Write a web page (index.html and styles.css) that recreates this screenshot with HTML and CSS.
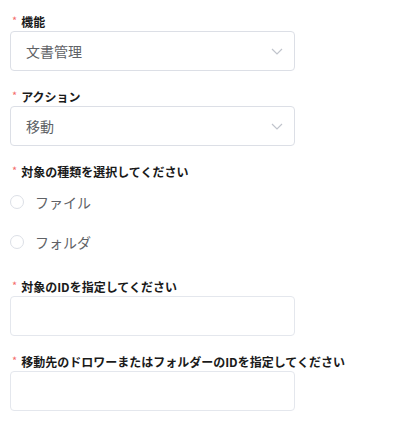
FILE: index.html
```html
<!DOCTYPE html>
<html lang="ja">
<head>
<meta charset="utf-8">
<link rel="stylesheet" href="styles.css">
</head>
<body>
<form class="form">
  <div class="item">
    <label class="label"><span class="req">*</span>機能</label>
    <div class="select">
      <span class="value">文書管理</span>
      <svg class="chev" width="12" height="7" viewBox="0 0 12 7"><path d="M1 1l5 5 5-5" fill="none" stroke="#c0c4cc" stroke-width="1.2"/></svg>
    </div>
  </div>
  <div class="item">
    <label class="label"><span class="req">*</span>アクション</label>
    <div class="select">
      <span class="value">移動</span>
      <svg class="chev" width="12" height="7" viewBox="0 0 12 7"><path d="M1 1l5 5 5-5" fill="none" stroke="#c0c4cc" stroke-width="1.2"/></svg>
    </div>
  </div>
  <div class="item">
    <label class="label"><span class="req">*</span>対象の種類を選択してください</label>
    <div class="radios">
      <div class="radio"><span class="circle"></span><span class="rtext">ファイル</span></div>
      <div class="radio"><span class="circle"></span><span class="rtext">フォルダ</span></div>
    </div>
  </div>
  <div class="item">
    <label class="label"><span class="req">*</span>対象のIDを指定してください</label>
    <div class="input"></div>
  </div>
  <div class="item">
    <label class="label"><span class="req">*</span>移動先のドロワーまたはフォルダーのIDを指定してください</label>
    <div class="input"></div>
  </div>
</form>
</body>
</html>
```
FILE: styles.css
```css
html, body {
  margin: 0;
  padding: 0;
  background: #fff;
}
body {
  font-family: "Noto Sans CJK JP", "Noto Sans", sans-serif;
}
.form {
  padding: 12px 0 0 10px;
  width: 285px;
}
.item {
  display: flex;
  flex-direction: column;
  margin-bottom: 16px;
}
.label {
  display: flex;
  align-items: center;
  height: 19px;
  font-size: 12px;
  font-weight: 700;
  color: #1a1a1a;
  white-space: nowrap;
}
.req {
  color: #f56c6c;
  font-size: 11px;
  font-weight: 400;
  margin: 0 4px 0 2px;
  position: relative;
  top: -2px;
}
.select, .input {
  box-sizing: border-box;
  height: 40px;
  border: 1px solid #dcdfe6;
  border-radius: 4px;
  display: flex;
  align-items: center;
  justify-content: space-between;
  padding: 0 11px 0 15px;
}
.input {
  border-color: #e4e7ed;
}
.value {
  font-size: 14px;
  color: #606266;
}
.chev {
  margin-top: 1px;
}
.radios {
  display: flex;
  flex-direction: column;
}
.radio {
  height: 40px;
  display: flex;
  align-items: center;
  padding-top: 1px;
  box-sizing: border-box;
}
.circle {
  box-sizing: border-box;
  width: 14px;
  height: 14px;
  border: 1px solid #dcdfe6;
  border-radius: 50%;
  margin-right: 11px;
}
.rtext {
  font-size: 14px;
  color: #606266;
}
```
